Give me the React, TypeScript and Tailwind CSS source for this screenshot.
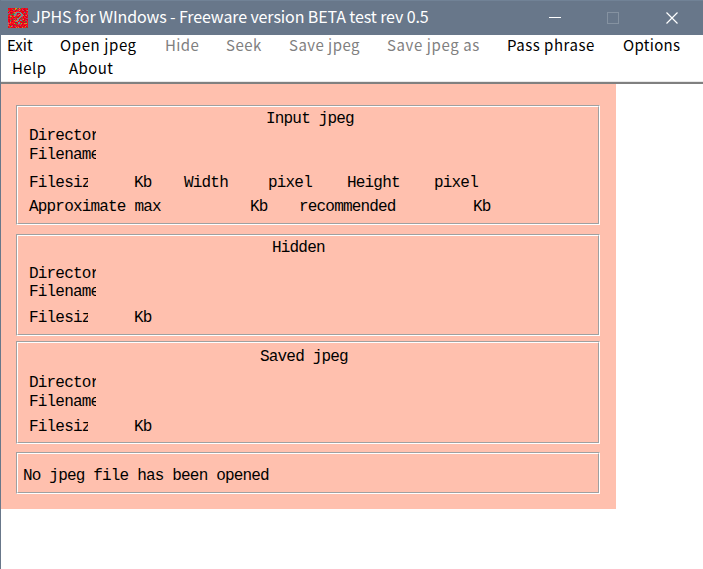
import type { ReactNode } from 'react';

const PALETTE = ['#e80818', '#ff0010', '#d00020', '#e00818', '#ff2020', '#e00010', '#20a040', '#c03080', '#e88020', '#d01830', '#ff1018', '#f01020'];

const GLYPH = [
  [7, 5], [8, 4], [9, 4], [10, 4], [11, 4], [12, 5], [13, 6], [13, 7], [12, 8], [11, 9],
  [10, 10], [9, 11], [9, 12], [10, 14], [10, 15], [6, 6], [6, 7], [7, 13], [12, 12],
];

function AppIcon() {
  const cells: ReactNode[] = [];
  let seed = 37;
  for (let y = 0; y < 20; y++) {
    for (let x = 0; x < 20; x++) {
      seed = (seed * 48271) % 2147483647;
      const color = PALETTE[Math.floor((seed / 2147483647) * PALETTE.length)];
      cells.push(<rect key={`${x}-${y}`} x={x} y={y} width="1" height="1" fill={color} />);
    }
  }
  return (
    <svg className="ml-[7px] h-5 w-5 shrink-0" viewBox="0 0 20 20" shapeRendering="crispEdges">
      {cells}
      {GLYPH.map(([x, y]) => (
        <rect key={`g${x}-${y}`} x={x} y={y} width="1.5" height="1" fill="#6f9096" />
      ))}
    </svg>
  );
}

function TitleBar() {
  return (
    <header className="flex h-[35px] items-center border-t border-[#718296] bg-[#68778a] pb-px text-white">
      <AppIcon />
      <h1 className="ml-[4px] w-[500px] whitespace-nowrap pb-[3px] font-['Noto_Sans_CJK_SC','Noto_Sans',sans-serif] text-[16px] leading-5 tracking-[-0.11px]">
        JPHS for WIndows - Freeware version BETA test rev 0.5
      </h1>
      <svg className="ml-[17px] h-3 w-3" viewBox="0 0 12 12" shapeRendering="crispEdges">
        <path d="M0 5.5H12" stroke="white" />
      </svg>
      <svg className="ml-[46px] h-3 w-3" viewBox="0 0 12 12">
        <rect x=".5" y=".5" width="11" height="11" fill="none" stroke="#8592a1" />
      </svg>
      <svg className="ml-[47px] h-3 w-3" viewBox="0 0 12 12">
        <path d="M.5 .5L11.5 11.5M11.5 .5L.5 11.5" stroke="white" strokeWidth="1.2" />
      </svg>
    </header>
  );
}

function Menu() {
  return (
    <nav className="h-[46px] whitespace-nowrap bg-white font-['Noto_Sans_CJK_SC','Noto_Sans',sans-serif] text-[15px] leading-5 text-black">
      <div className="flex h-[23px] pl-[6px]">
        <span className="w-[53px]">Exit</span>
        <span className="w-[105px] tracking-[0.6px]">Open jpeg</span>
        <span className="w-[61px] tracking-[0.4px] text-[#808080]">Hide</span>
        <span className="w-[63px] tracking-[0.5px] text-[#808080]">Seek</span>
        <span className="w-[98px] tracking-[0.45px] text-[#808080]">Save jpeg</span>
        <span className="w-[120px] tracking-[0.6px] text-[#808080]">Save jpeg as</span>
        <span className="w-[116px] tracking-[0.5px]">Pass phrase</span>
        <span className="tracking-[0.3px]">Options</span>
      </div>
      <div className="flex h-[23px] pl-[11px]">
        <span className="w-[57px] tracking-[0.4px]">Help</span>
        <span className="tracking-[0.4px]">About</span>
      </div>
    </nav>
  );
}

function Panel({ className, children }: { className: string; children: ReactNode }) {
  return (
    <section className={`w-[584px] border border-b-white border-l-[#a0a0a0] border-r-white border-t-[#a0a0a0] ${className}`}>
      <div className="h-full border border-b-[#a0a0a0] border-l-white border-r-[#a0a0a0] border-t-white">{children}</div>
    </section>
  );
}

function FileRows({ first, second, third }: { first: string; second: string; third: string }) {
  return (
    <>
      <div className={`ml-[11px] h-4 w-[67px] overflow-hidden ${first}`}>Directory</div>
      <div className={`ml-[11px] h-4 w-[67px] overflow-hidden ${second}`}>Filename</div>
      <div className={`ml-[11px] flex h-4 ${third}`}>
        <span className="w-[59px] overflow-hidden">Filesize</span>
        <span className="ml-[46px]">Kb</span>
      </div>
    </>
  );
}

export default function App() {
  return (
    <div className="h-[569px] w-[703px] overflow-hidden border-l border-[#68778a] bg-white">
      <TitleBar />
      <Menu />
      <div className="h-[3px] border-b-2 border-[#808080] bg-[#e8e8e8]" />
      <main className="flex h-[425px] w-[615px] flex-col whitespace-pre bg-[#ffc0ae] pl-[15px] pt-[21px] font-['Liberation_Mono',monospace] text-[16px] leading-4 tracking-[-0.82px] text-black">
        <Panel className="h-[120px]">
          <h2 className="ml-[248px] mt-[4px] h-4">Input jpeg</h2>
          <div className="ml-[11px] mt-px h-4 w-[67px] overflow-hidden">Directory</div>
          <div className="ml-[11px] mt-[3px] h-4 w-[67px] overflow-hidden">Filename</div>
          <div className="ml-[11px] mt-[12px] flex h-4">
            <span className="w-[59px] overflow-hidden">Filesize</span>
            <span className="ml-[46px] w-[50px]">Kb</span>
            <span className="w-[84px]">Width</span>
            <span className="w-[79px]">pixel</span>
            <span className="w-[87px]">Height</span>
            <span>pixel</span>
          </div>
          <div className="ml-[11px] mt-2 flex h-4">
            <span className="w-[221px]">Approximate max</span>
            <span className="w-[49px]">Kb</span>
            <span className="w-[174px]">recommended</span>
            <span>Kb</span>
          </div>
        </Panel>
        <Panel className="mt-[9px] h-[102px]">
          <h2 className="ml-[254px] mt-[4px] h-4">Hidden</h2>
          <FileRows first="mt-[10px]" second="mt-[2px]" third="mt-[10px]" />
        </Panel>
        <Panel className="mt-[5px] h-[103px]">
          <h2 className="ml-[242px] mt-[6px] h-4">Saved jpeg</h2>
          <FileRows first="mt-[10px]" second="mt-[3px]" third="mt-[9px]" />
        </Panel>
        <Panel className="mt-[8px] h-[42px]">
          <p className="ml-[5px] mt-[14px] h-4">No jpeg file has been opened</p>
        </Panel>
      </main>
    </div>
  );
}
